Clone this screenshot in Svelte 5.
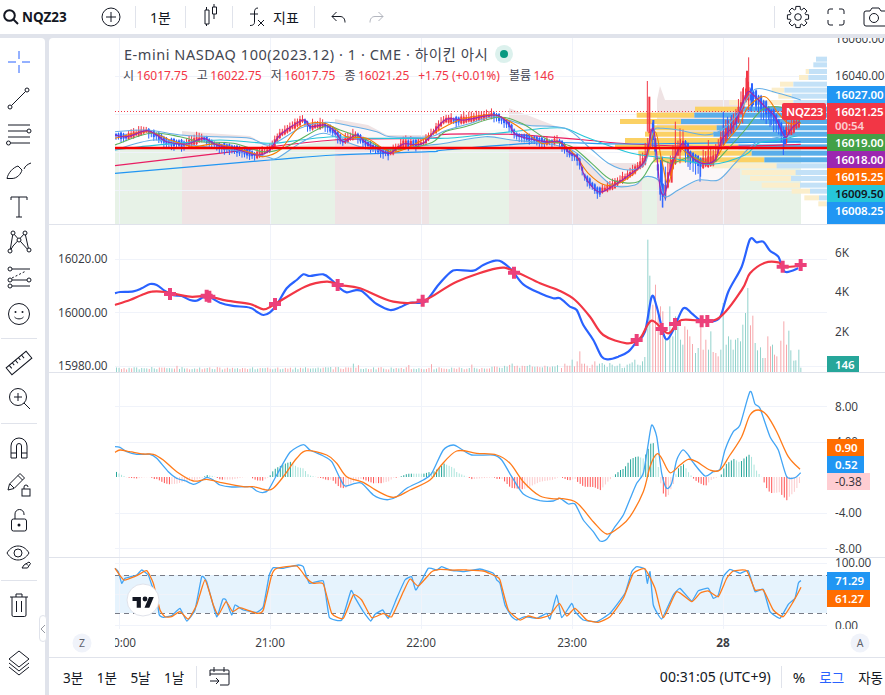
<script>
  const Z = (ox, oy, a) => a.map(([x, y]) => [ox + x / 3, oy + y / 3]);
  const sm = (p, t = 0.16) => {
    let d = `M${p[0][0].toFixed(1)} ${p[0][1].toFixed(1)}`;
    for (let i = 0; i < p.length - 1; i++) {
      const a = p[Math.max(i - 1, 0)], b = p[i], c = p[i + 1], e = p[Math.min(i + 2, p.length - 1)];
      d += `C${(b[0] + (c[0] - a[0]) * t).toFixed(1)} ${(b[1] + (c[1] - a[1]) * t).toFixed(1)} ${(c[0] - (e[0] - b[0]) * t).toFixed(1)} ${(c[1] - (e[1] - b[1]) * t).toFixed(1)} ${c[0].toFixed(1)} ${c[1].toFixed(1)}`;
    }
    return d;
  };
  const at = (p, x) => {
    if (x <= p[0][0]) return p[0][1];
    for (let i = 0; i < p.length - 1; i++) {
      if (x <= p[i + 1][0]) return p[i][1] + ((p[i + 1][1] - p[i][1]) * (x - p[i][0])) / (p[i + 1][0] - p[i][0]);
    }
    return p[p.length - 1][1];
  };
  let seed = 11;
  const rnd = () => (seed = (seed * 16807) % 2147483647) / 2147483647;

  const vlines = [119.5, 270.5, 421.5, 572.5, 723.5];

  /* main pane */
  const mz = (a, b) => [...Z(0, 0, a), ...Z(445, 0, b)];
  const price = mz(
    [[345,405],[380,410],[440,392],[470,405],[500,425],[560,432],[610,415],[650,435],[700,445],[770,465],[810,450],[840,405],[910,360],[930,380],[975,375],[1005,395],[1030,425],[1070,405],[1100,430],[1140,450],[1170,460],[1210,432],[1270,430]],
    [[0,360],[60,360],[150,345],[190,370],[215,405],[300,425],[345,425],[370,455],[400,475],[420,530],[460,575],[500,560],[560,520],[600,480],[625,385],[645,560],[660,580],[675,510],[695,460],[715,430],[740,470],[770,490],[810,480],[830,420],[870,370],[905,280],[925,285],[960,320],[990,350],[1020,410],[1040,385],[1065,365]]
  );
  const orangeM = sm(mz(
    [[345,415],[440,395],[510,420],[580,440],[650,432],[760,460],[790,470],[840,450],[900,380],[975,370],[1040,410],[1100,415],[1170,455],[1230,440]],
    [[0,380],[60,355],[150,345],[220,380],[290,430],[340,425],[390,465],[430,520],[480,555],[540,540],[600,480],[630,395],[650,480],[670,550],[700,450],[740,470],[800,490],[840,430],[880,380],[910,320],[960,290],[1000,340],[1030,370],[1067,370]]
  ));
  const greenM = sm(mz(
    [[345,435],[450,400],[540,410],[600,425],[700,430],[790,455],[860,440],[970,380],[1020,390],[1100,420],[1170,450],[1290,430]],
    [[0,395],[60,380],[160,352],[230,370],[310,420],[380,440],[440,490],[500,540],[580,545],[620,490],[640,475],[680,490],[740,470],[800,490],[850,445],[900,390],[950,330],[1000,320],[1040,340],[1067,370]]
  ));
  const tealM = sm(mz(
    [[345,450],[420,440],[530,430],[660,420],[810,430],[900,420],[1000,410],[1100,415],[1280,415]],
    [[0,415],[60,410],[200,395],[300,385],[360,385],[420,410],[560,460],[680,475],[800,493],[900,465],[940,430],[1000,420],[1067,405]]
  ));
  const upperP = mz(
    [[345,395],[440,390],[540,405],[650,410],[750,415],[810,435],[900,385],[980,367],[1050,378],[1130,395],[1170,410],[1290,410]],
    [[0,392],[70,372],[150,350],[240,375],[360,385],[430,440],[490,490],[550,510],[600,490],[625,395],[650,385],[700,390],[780,405],[830,390],[880,340],[930,268],[1000,280],[1067,300]]
  );
  const lowerP = mz(
    [[345,450],[460,420],[570,435],[700,450],[800,470],[830,475],[900,430],[970,400],[1050,430],[1130,450],[1290,435]],
    [[0,430],[120,410],[200,420],[300,430],[380,450],[430,490],[500,555],[570,555],[600,530],[640,540],[660,590],[700,570],[760,540],[820,540],[870,490],[930,430],[1010,410],[1067,405]]
  );
  const pinkM = sm(mz([[345,497],[700,455],[1000,420],[1290,415]], [[0,403],[200,403],[300,410],[420,420],[560,432],[800,440],[1067,433]]));
  const blueL = sm(mz([[345,520],[810,480],[1005,465],[1290,455]], [[0,450],[300,428],[560,432],[1067,425]]));
  const bandFill = sm(upperP) + 'L' + [...lowerP].reverse().map((q) => `${q[0].toFixed(1)} ${q[1].toFixed(1)}`).join('L') + 'Z';
  const upperM = sm(upperP), lowerM = sm(lowerP), purpleM = sm(price);

  const periods = [
    ['#e7f2e7', 'M115 148H182V224H115Z'],
    ['#efe3e4', 'M182 131L207 133L250 136L270 147V224H182Z'],
    ['#e7f2e7', 'M270 150L335 140V224H270Z'],
    ['#efe3e4', 'M335 119L368 125L387 135H429V224H335Z'],
    ['#e7f2e7', 'M429 138L509 128V224H429Z'],
    ['#efe3e4', 'M509 108L558 127L578 146L605 163H642V224H509Z'],
    ['#e7f2e7', 'M642 165H657V224H642Z'],
    ['#efe3e4', 'M657 100L660 86L665 100H740V224H657Z'],
    ['#e7f2e7', 'M740 148H801V224H740Z']
  ];

  const prof = [
    [170,0,1113,0],[187,0,1105,0],[207,1082,1092,0],[225,1062,1090,0],[245,1005,1045,0],[263,980,1018,0],[281,1000,1040,0],[300,852,1045,0],
    [320,750,880,1],[338,575,748,1],[357,525,708,1],[376,625,815,1],[395,600,805,1],[414,540,830,1],[433,510,880,1],[452,580,920,1],[472,625,958,1],
    [490,800,995,0],[510,890,1052,0],[528,915,1038,0],[548,950,1065,0],[566,1040,1095,0],[586,1078,1122,0],[604,1120,1145,0]
  ].map(([y, a, b, s]) => ({
    y: y / 3,
    yx: a ? 445 + a / 3 : 0,
    bx: 445 + b / 3,
    s
  }));

  const candles = [];
  for (let x = 116; x < 801; x += 2.52) {
    const y = at(price, x);
    const dy = at(price, x + 3) - at(price, x - 3);
    const up = dy < -0.3 || (Math.abs(dy) <= 0.3 && rnd() > 0.5);
    const b = 1.2 + rnd() * 2.4;
    const big = x > 640 ? 2.2 : 1;
    const w = (2 + rnd() * 3.4) * big;
    candles.push({ x, y1: y - b * big, y2: y + b * big, t: y - b * big - (up ? w : 1), u: y + b * big + (up ? 1 : w), c: up ? '#f23645' : '#2962ff' });
  }
  const spikes = [
    [607,243,395,'#f23645',1],[613,290,400,'#f23645',4],[625,360,420,'#2962ff',4],[652,470,622,'#2962ff',1],[648,480,570,'#2962ff',4],[661,500,602,'#2962ff',1],[680,480,548,'#f23645',4],[691,365,440,'#f23645',1],[705,385,490,'#f23645',1],[735,455,510,'#2962ff',1],[765,480,545,'#2962ff',1],[790,420,500,'#f23645',1],
    [835,335,440,'#2962ff',1],[848,350,420,'#2962ff',1],[860,345,400,'#2962ff',1],[875,340,390,'#2962ff',1],[893,265,370,'#f23645',1],[911,172,330,'#f23645',1],[906,212,300,'#f23645',4],[921,250,320,'#2962ff',4],[933,285,320,'#2962ff',3],[975,335,380,'#2962ff',1],[1015,380,465,'#2962ff',1],[1020,390,432,'#2962ff',4]
  ].map(([x, a, b, c, w]) => ({ x: 445 + x / 3, a: a / 3, b: b / 3, c, w: w === 1 ? 1 : w / 2 }));

  const tags1 = [
    [86,17,'#2196f3','#fff','16027.00'],
    [134,17,'#43a047','#fff','16019.00'],
    [151,17,'#9c27b0','#fff','16018.00'],
    [168,17,'#ff6d00','#fff','16015.25'],
    [185,17,'#26c6da','#131722','16009.50'],
    [202,18,'#2196f3','#fff','16008.25'],
    [220,18,'#2196f3','#fff','16004.00']
  ];

  /* pane 2 */
  const rsiB = sm([...Z(110, 230, [[15,190],[30,186],[70,184],[95,175],[120,162],[140,165],[165,183],[190,196],[215,198],[240,210],[260,212],[280,202],[300,202],[330,218],[365,227],[420,233],[440,245],[460,255],[480,247],[500,225],[530,175],[560,150],[580,133],[600,138],[640,133],[665,150],[690,175],[710,187],[735,181],[755,183],[780,205],[800,222],[840,240],[870,232],[900,218],[945,215],[985,165],[1020,128],[1040,120],[1090,122],[1120,105],[1155,92],[1175,95],[1205,120],[1240,163],[1290,190],[1330,205]]),
    ...Z(560, 230, [[0,205],[30,230],[50,240],[70,285],[100,330],[125,380],[145,388],[175,380],[205,365],[230,335],[255,305],[275,200],[290,230],[310,310],[322,328],[340,300],[370,235],[395,250],[420,270],[450,275],[480,262],[505,185],[545,110],[570,28],[590,37],[610,35],[630,62],[655,80],[675,125],[715,115]])]);
  const rsiR = sm([...Z(110, 230, [[15,225],[60,210],[95,195],[125,185],[165,186],[240,200],[290,198],[350,212],[420,222],[460,238],[490,225],[585,170],[650,155],[690,165],[750,175],[850,215],[940,212],[1040,155],[1160,115],[1210,122],[1290,160]]),
    ...Z(560, 230, [[0,183],[45,210],[90,260],[130,315],[200,340],[240,325],[275,272],[325,310],[365,270],[470,268],[545,180],[570,130],[615,98],[655,97],[670,110],[720,108]])]);
  const crosses = [
    ...Z(110, 230, [[180,192],[290,197],[298,200],[495,222],[683,165],[938,212],[1212,128]]),
    ...Z(560, 230, [[230,330],[305,297],[345,282],[425,274],[442,273],[668,110],[722,105]])
  ];
  const vols = [];
  for (let x = 116; x < 558; x += 2.52) {
    const late = x > 490 ? 1.6 : 1;
    let h = (2.5 + rnd() * 2.5) * late;
    if (rnd() > 0.93) h += 2 + rnd() * 3;
    vols.push({ x, h, c: rnd() > 0.5 ? '#93d3cc' : '#f7a8ac' });
  }
  const g = '#93d3cc', r = '#f7a8ac';
  [[3,415,r],[13,402,r],[20,408,r],[28,408,r],[35,390,g],[42,410,r],[50,395,r],[58,365,r],[64,402,r],[72,402,r],[80,408,r],[88,415,r],[95,405,r],[103,395,r],[110,408,g],[117,402,g],[125,400,g],[132,405,g],[140,412,g],[148,400,g],[155,405,g],[163,410,g],[170,408,g],[178,402,g],[185,415,g],[192,414,g],[200,405,g],[208,402,g],[215,398,g],[223,390,g],[232,405,g],[239,407,g],[246,395,g],[253,382,g],[262,30,g],[268,138,g],[277,225,r],[285,165,r],[293,260,r],[300,230,r],[307,245,r],[315,320,g],[328,230,g],[337,320,g],[345,260,g],[352,290,g],[360,330,g],[367,345,g],[373,290,r],[381,300,r],[388,320,r],[396,343,r],[405,370,g],[413,355,g],[421,290,r],[428,360,r],[436,330,r],[444,360,g],[451,305,g],[458,367,r],[466,370,r],[473,380,r],[481,360,g],[488,220,g],[497,345,g],[504,320,g],[511,330,g],[518,360,g],[525,330,g],[532,325,g],[540,335,g],[547,285,g],[555,250,g],[562,175,g],[570,287,r],[577,258,r],[584,340,g],[591,362,g],[600,353,g],[607,385,g],[614,385,r],[622,320,r],[630,350,r],[636,345,g],[642,375,r],[649,380,r],[661,333,r],[670,275,r],[678,345,r],[685,303,g],[691,362,g],[700,393,g],[706,392,g],[715,360,g],[721,414,g]]
    .forEach(([x, t, c]) => vols.push({ x: 560 + x / 3, h: (427 - t) / 3, c }));

  /* pane 3 */
  const mB = [...Z(110, 420, [[15,80],[30,82],[50,95],[80,103],[120,103],[140,115],[175,155],[200,175],[225,182],[250,193],[270,185],[290,172],[310,180],[330,195],[365,201],[420,200],[440,213],[458,218],[475,210],[500,165],[540,97],[580,74],[600,90],[640,108],[665,125],[690,175],[705,198],[735,190],[755,190],[790,225],[810,235],[835,239],[860,230],[890,205],[940,180],[965,160],[1000,90],[1030,75],[1050,85],[1085,105],[1150,105],[1175,120],[1205,170],[1240,222],[1290,242],[1330,243]]),
    ...Z(560, 380, [[0,355],[25,372],[45,372],[70,420],[100,455],[120,483],[140,478],[165,440],[190,405],[215,345],[230,310],[250,280],[265,190],[275,135],[290,170],[305,280],[320,325],[335,310],[350,240],[368,210],[385,225],[400,248],[435,288],[460,275],[480,268],[495,210],[520,155],[540,135],[570,35],[585,72],[600,85],[630,170],[655,210],[680,290],[705,293],[722,278]])];
  const mO = [...Z(110, 420, [[15,97],[30,90],[60,95],[100,102],[130,103],[160,120],[200,155],[250,183],[290,178],[330,187],[400,200],[430,200],[470,210],[490,205],[520,170],[560,115],[590,92],[650,105],[680,130],[710,170],[760,187],[800,212],[850,232],[900,210],[960,180],[990,140],[1040,93],[1100,100],[1160,105],[1200,130],[1240,185],[1290,228],[1340,237]]),
    ...Z(560, 380, [[0,355],[50,368],[100,425],[140,462],[180,440],[210,410],[250,335],[270,260],[290,222],[305,235],[330,278],[360,255],[385,238],[410,245],[450,270],[480,270],[510,225],[545,170],[570,105],[595,90],[620,105],[650,155],[685,230],[720,268]])];
  const macdB = sm(mB, 0.12), macdO = sm(mO);
  const hist = [];
  let prev = 0;
  for (let x = 116; x < 801; x += 2.52) {
    const v = at(mO, x) - at(mB, x);
    const grow = Math.abs(v) > Math.abs(prev);
    hist.push({ x, v, c: v > 0 ? (grow ? '#26a69a' : '#ace5dc') : grow ? '#ff5252' : '#fccbcd' });
    prev = v;
  }

  /* pane 4 */
  const sB = sm([...Z(50, 555, [[195,40],[205,50],[215,85],[225,70],[260,60],[275,45],[295,60],[305,90],[320,130],[328,180],[340,187],[365,182],[390,160],[410,198],[435,165],[455,65],[470,80],[500,185],[518,133],[528,135],[545,180],[555,150],[580,165],[620,172],[640,155],[658,60],[670,38],[700,40],[745,30],[760,35],[778,85],[820,78],[838,187],[875,195],[903,107],[915,128],[940,170],[962,198],[975,178],[998,165],[1015,190],[1040,130],[1065,75],[1085,65],[1098,105],[1135,40],[1160,45],[1175,35],[1200,45],[1240,50],[1290,42],[1330,55],[1340,75]]),
    ...Z(500, 555, [[0,85],[15,150],[35,185],[50,195],[75,185],[110,190],[140,175],[150,192],[170,120],[185,188],[215,145],[225,170],[250,195],[290,200],[330,175],[375,115],[395,50],[410,35],[435,42],[442,85],[450,50],[460,150],[485,192],[520,120],[540,100],[575,138],[595,107],[625,100],[640,130],[655,120],[670,65],[690,43],[720,55],[745,47],[765,110],[790,103],[810,170],[840,190],[865,148],[885,130],[895,85],[903,77]])], 0.06);
  const sO = sm([...Z(50, 555, [[195,40],[222,75],[260,62],[290,47],[310,85],[330,165],[345,185],[365,185],[390,170],[415,192],[440,150],[465,75],[490,150],[505,180],[528,140],[548,170],[570,158],[620,175],[640,165],[665,60],[680,40],[740,33],[770,70],[790,85],[820,87],[845,175],[880,190],[910,120],[935,135],[965,188],[1000,175],[1025,185],[1060,110],[1080,72],[1105,93],[1145,50],[1170,43],[1200,45],[1250,45],[1300,48],[1340,65]]),
    ...Z(500, 555, [[0,75],[25,165],[60,195],[85,183],[115,190],[150,180],[178,145],[200,183],[225,160],[260,195],[295,202],[330,185],[370,130],[400,55],[435,42],[465,100],[490,188],[530,110],[575,140],[600,115],[625,108],[655,125],[680,70],[700,48],[740,47],[765,105],[790,105],[820,165],[850,185],[880,140],[903,97]])], 0.08);

  const gear = (() => {
    let d = '';
    const n = 8;
    for (let i = 0; i < n; i++) {
      const a = (i / n) * Math.PI * 2;
      const pt = (rad, da) => `${(14 + rad * Math.cos(a + da)).toFixed(2)} ${(14 + rad * Math.sin(a + da)).toFixed(2)}`;
      d += (i ? 'L' : 'M') + pt(8, -0.3) + 'L' + pt(10.8, -0.2) + 'L' + pt(10.8, 0.2) + 'L' + pt(8, 0.3);
    }
    return d + 'Z';
  })();
</script>

<div class="root">
  <header class="top">
    <svg class="i search" width="16" height="16" viewBox="0 0 16 16"><circle cx="6.5" cy="6.5" r="5.3" /><path d="M10.5 10.5L15 15" /></svg>
    <b class="sym">NQZ23</b>
    <svg class="i plus" width="20" height="20" viewBox="0 0 20 20"><circle cx="10" cy="10" r="9" /><path d="M10 5v10M5 10h10" /></svg>
    <span class="div d1"></span>
    <span class="tt iv">1분</span>
    <span class="div d2"></span>
    <svg class="i cnd" width="16" height="22" viewBox="0 0 16 22"><path d="M3.5 3V6M3.5 20V22M2 6h4v14H2zM11 0v3M11 10v5M9.5 3h4v7h-4z" /></svg>
    <span class="div d3"></span>
    <svg class="i fx" width="16" height="20" viewBox="0 0 16 20"><path d="M9 1C6 1 5.5 3 5.500 5V15C5.500 17 4.500 18.500 1 18.500M1 7H9M9 13l6 6M15 13l-6 6" /></svg>
    <span class="tt ind">지표</span>
    <span class="div d4"></span>
    <svg class="i undo" width="15" height="13" viewBox="0 0 15 13"><path d="M5.500 1L1 5.500l4.500 4.500M1 5.500h8c3 0 5 2 5 6" /></svg>
    <svg class="i redo" width="15" height="13" viewBox="0 0 15 13"><path d="M9.500 1L14 5.500 9.500 10M14 5.500H6c-3 0-5 2-5 6" /></svg>
    <span class="right">
      <span class="div"></span>
      <svg class="i gear" width="28" height="28" viewBox="0 0 28 28"><path d={gear} /><circle cx="14" cy="14" r="3.300" /></svg>
      <svg class="i full" width="18" height="18" viewBox="0 0 18 18"><path d="M1 6V3a2 2 0 0 1 2-2h3M12 1h3a2 2 0 0 1 2 2v3M17 12v3a2 2 0 0 1-2 2h-3M6 17H3a2 2 0 0 1-2-2v-3" /></svg>
      <svg class="i cam" width="23" height="20" viewBox="0 0 23 20"><path d="M1 6a2 2 0 0 1 2-2h4l2-3h7l2 3h4a2 2 0 0 1 2 2v11a2 2 0 0 1-2 2H3a2 2 0 0 1-2-2z" /><circle cx="11" cy="11" r="4.500" /></svg>
    </span>
  </header>

  <div class="body">
    <aside class="side">
      <div class="t blue"><svg width="28" height="28" viewBox="0 0 28 28"><path d="M14 3v8M14 17v8M3 14h8M17 14h8" /></svg></div>
      <div class="t"><svg width="28" height="28" viewBox="0 0 28 28"><path d="M6.500 21.500L20.500 7.500" /><circle cx="5" cy="23" r="2" /><circle cx="22" cy="6" r="2" /></svg></div>
      <div class="t"><svg width="28" height="28" viewBox="0 0 28 28"><path d="M3 5h22M3 11h19M3 17h22M6 23h19" /><circle cx="24" cy="11" r="2" /><circle cx="3.500" cy="23" r="2" /></svg></div>
      <div class="t"><svg width="28" height="28" viewBox="0 0 28 28"><path d="M2 22.500C3 17 8 11.500 13 10l4 4c-1 4-5 8.500-10 8.500zM19 13c1-3 4-5 7-6" /></svg></div>
      <div class="t"><svg width="28" height="28" viewBox="0 0 28 28"><path d="M6 8V5h16v3M14 5v20M11 25h6" /></svg></div>
      <div class="t"><svg width="28" height="28" viewBox="0 0 28 28"><path d="M5 23L8 5l16 18L20 5 8 18z" /><circle cx="5" cy="23" r="2" fill="#fff" /><circle cx="8" cy="5" r="2" fill="#fff" /><circle cx="20" cy="5" r="2" fill="#fff" /><circle cx="24" cy="22" r="2" fill="#fff" /><circle cx="14" cy="12" r="2" fill="#fff" /></svg></div>
      <div class="t"><svg width="28" height="28" viewBox="0 0 28 28"><path d="M7 5h18M7 16h15M7 22h18" /><path d="M7 14L21 7" stroke-dasharray="2 2" /><circle cx="5" cy="5" r="2" /><circle cx="5" cy="16" r="2" /><circle cx="24" cy="16" r="2" /><circle cx="5" cy="22" r="2" /></svg></div>
      <div class="t"><svg width="28" height="28" viewBox="0 0 28 28"><circle cx="14" cy="14" r="10.500" /><circle class="f" cx="10.500" cy="12" r="1" /><circle class="f" cx="17.500" cy="12" r="1" /><path d="M9.500 17c2 2.500 7 2.500 9 0" /></svg></div>
      <span class="sep"></span>
      <div class="t"><svg width="28" height="28" viewBox="0 0 28 28"><g transform="rotate(-40 14 14)"><rect x="1" y="9.500" width="26" height="9" /><path d="M5 9.500v4M9 9.500v3M13 9.500v4M17 9.500v3M21 9.500v4" /></g></svg></div>
      <div class="t"><svg width="28" height="28" viewBox="0 0 28 28"><circle cx="13" cy="12" r="8.500" /><path d="M13 8v8M9 12h8M19 18l6 6" /></svg></div>
      <span class="sep"></span>
      <div class="t"><svg width="28" height="28" viewBox="0 0 28 28"><path d="M6 24V12a8 8 0 0 1 16 0v12h-5.500V12a2.500 2.500 0 0 0-5 0v12zM6 19h5.500M16.500 19H22" /></svg></div>
      <div class="t"><svg width="28" height="28" viewBox="0 0 28 28"><path d="M3 20l1.500-6L15 3.500 19.500 8 9 18.500zM13 5.500l4.500 4.500M5 14l4 4" /><rect x="17" y="19" width="8" height="7" /><path d="M19 19v-2a2 2 0 0 1 4 0" /></svg></div>
      <div class="t"><svg width="28" height="28" viewBox="0 0 28 28"><rect x="6.500" y="13" width="15" height="12" rx="2" /><path d="M10 13V8a4.500 4.500 0 0 1 9 0v1" /><circle class="f" cx="14" cy="19" r="1.500" /></svg></div>
      <div class="t"><svg width="28" height="28" viewBox="0 0 28 28"><path d="M2 11c3-5 7-7 11-7s8 2 11 7c-3 5-7 7-11 7s-8-2-11-7z" /><circle cx="13" cy="11" r="4" /><path d="M17 26l2-3 5-3 1.500 1.500-3 4.500zM21 21.500l2 2" /></svg></div>
      <span class="sep"></span>
      <div class="t"><svg width="28" height="28" viewBox="0 0 28 28"><path d="M5 6h18M11 6V3h6v3M7 6v18a1.500 1.500 0 0 0 1.500 1.500h11A1.500 1.500 0 0 0 21 24V6M11.500 10v11M16.500 10v11" /></svg></div>
      <div class="t bottom"><svg width="28" height="28" viewBox="0 0 28 28"><path d="M14 3l10 8-10 8-10-8zM4 15l10 8 10-8M4 19l10 8 10-8" /></svg></div>
      <span class="collapse"><svg width="6" height="10" viewBox="0 0 6 10"><path d="M5 1L1 5l4 4" /></svg></span>
    </aside>

    <main class="main">
      <section class="pane p1">
        <svg class="chart" width="836" height="186" viewBox="49 38 836 186">
          {#each periods as q}<path d={q[1]} fill={q[0]} />{/each}
          {#each [76.5, 114.5, 152.5, 190.5] as y}<path class="gh" d="M115 {y}H827" />{/each}
          {#each vlines as x}<path class="gh" d="M{x} 38V224" />{/each}
          <path d={bandFill} fill="#fff" opacity=".72" />
          {#each prof as q}
            {#if q.yx}<rect x={q.yx} y={q.y} width={q.bx - q.yx} height="5" fill={q.s ? '#fbd164' : '#fbeecb'} />{/if}
            <rect x={q.bx} y={q.y} width={827 - q.bx} height="5" fill={q.s ? '#59ade9' : '#c3e1f7'} />
          {/each}
          <path class="ln" d={pinkM} stroke="#e91e63" stroke-width="1.200" />
          <path class="ln" d={blueL} stroke="#2196f3" stroke-width="1.200" />
          {#each candles as c}
            <path d="M{c.x} {c.t}V{c.u}" stroke={c.c} stroke-width="1" />
            <path d="M{c.x} {c.y1}V{c.y2}" stroke={c.c} stroke-width="2" />
          {/each}
          {#each spikes as s}<path d="M{s.x} {s.a}V{s.b}" stroke={s.c} stroke-width={s.w} />{/each}
          <path class="ln" d={tealM} stroke="#26c6da" stroke-width="1.100" />
          <path class="ln" d={upperM} stroke="#64aee6" stroke-width="1.100" />
          <path class="ln" d={lowerM} stroke="#64aee6" stroke-width="1.100" />
          <path class="ln" d={greenM} stroke="#5cb260" stroke-width="1.100" />
          <path class="ln" d={orangeM} stroke="#f57c00" stroke-width="1.100" />
          <path class="ln" d={purpleM} stroke="#9c27b0" stroke-width="1.200" />
          <path d="M115 111.500H783" stroke="#f23645" stroke-dasharray="1 2" />
          <path d="M115 148H827" stroke="#f50000" stroke-width="2.400" />
          <rect x="827" y="38" width="58" height="186" fill="#fff" />
          <text class="ax" x="835" y="43">16060.00</text>
          <text class="ax" x="835" y="80">16040.00</text>
          {#each tags1 as q}
            <rect x="827" y={q[0]} width="58" height={q[1]} fill={q[2]} />
            <text class="tg" x="835" y={q[0] + 13} fill={q[3]}>{q[4]}</text>
          {/each}
          <rect x="827" y="103" width="58" height="31" fill="#f23645" />
          <text class="tg" x="835" y="116" fill="#fff">16021.25</text>
          <text class="tg dim" x="835" y="130" fill="#fff">00:54</text>
          <rect x="782" y="103" width="44" height="17" rx="2" fill="#f23645" />
          <text class="tg" x="786" y="116" fill="#fff">NQZ23</text>
        </svg>
        <div class="legend">
          <div class="title">E-mini NASDAQ 100(2023.12) · 1 · CME · 하이킨 아시 <i class="dot"></i></div>
          <div class="ohlc"><span>시<em>16017.75</em></span><span>고<em>16022.75</em></span><span>저<em>16017.75</em></span><span>종<em>16021.25</em></span><em class="chg">+1.75 (+0.01%)</em><span>볼륨<em>146</em></span></div>
        </div>
      </section>

      <section class="pane p2">
        <svg class="chart" width="836" height="147" viewBox="49 225 836 147">
          {#each [259.5, 312.5, 366.5] as y}<path class="gh" d="M115 {y}H827" />{/each}
          {#each vlines as x}<path class="gh" d="M{x} 225V372" />{/each}
          {#each vols as v}<rect x={v.x} y={372 - v.h} width="1" height={v.h} fill={v.c} />{/each}
          <path class="ln" d={rsiB} stroke="#2962ff" stroke-width="2.200" />
          <path class="ln" d={rsiR} stroke="#f23645" stroke-width="2.200" />
          {#each crosses as c}<path d="M{c[0] - 2} {c[1] - 6}h4v4h4v4h-4v4h-4v-4h-4v-4h4z" fill="#ec407a" />{/each}
          <text class="ax" x="58" y="263">16020.00</text>
          <text class="ax" x="58" y="317">16000.00</text>
          <text class="ax" x="58" y="370">15980.00</text>
          <text class="ax" x="835" y="257">6K</text>
          <text class="ax" x="835" y="296">4K</text>
          <text class="ax" x="835" y="336">2K</text>
          <rect x="827" y="356" width="32" height="16" fill="#26a69a" />
          <text class="tg" x="835" y="369" fill="#fff">146</text>
        </svg>
      </section>

      <section class="pane p3">
        <svg class="chart" width="836" height="184" viewBox="49 373 836 184">
          {#each [406.5, 442.500, 513.5, 548.5] as y}<path class="gh" d="M115 {y}H827" />{/each}
          {#each vlines as x}<path class="gh" d="M{x} 373V557" />{/each}
          {#each hist as h}<rect x={h.x} y={h.v > 0 ? 477 - h.v : 477} width="1" height={Math.abs(h.v)} fill={h.c} />{/each}
          <path class="ln" d={macdB} stroke="#42a5f5" stroke-width="1.300" />
          <path class="ln" d={macdO} stroke="#ff7b1a" stroke-width="1.300" />
          <text class="ax" x="835" y="411">8.00</text>
          <text class="ax" x="835" y="446">4.00</text>
          <text class="ax" x="835" y="517">-4.00</text>
          <text class="ax" x="835" y="553">-8.00</text>
          <rect x="827" y="439" width="37" height="17" fill="#ff6d00" />
          <text class="tg" x="835" y="452" fill="#fff">0.90</text>
          <rect x="827" y="456" width="37" height="17" fill="#2196f3" />
          <text class="tg" x="835" y="469" fill="#fff">0.52</text>
          <rect x="827" y="473" width="43" height="17" fill="#ffcdd2" />
          <text class="ax" x="835" y="486">-0.38</text>
        </svg>
      </section>

      <section class="pane p4">
        <svg class="chart" width="836" height="71" viewBox="49 558 836 71">
          <rect x="115" y="575" width="712" height="38" fill="#e6f3fd" />
          {#each [563.5, 594.5, 625.5] as y}<path class="gh" d="M115 {y}H827" />{/each}
          {#each vlines as x}<path class="gh" d="M{x} 558V629" />{/each}
          <path d="M115 575.500H827M115 613.500H827" stroke="#787b86" stroke-dasharray="5 4" />
          <path class="ln" d={sB} stroke="#42a5f5" stroke-width="1.300" />
          <path class="ln" d={sO} stroke="#ff7b1a" stroke-width="1.300" />
          <text class="ax" x="835" y="567">100.00</text>
          <text class="ax" x="835" y="630">0.00</text>
          <rect x="827" y="572" width="43" height="18" fill="#2196f3" />
          <text class="tg" x="835" y="585" fill="#fff">71.29</text>
          <rect x="827" y="590" width="43" height="17" fill="#ff6d00" />
          <text class="tg" x="835" y="603" fill="#fff">61.27</text>
          <circle cx="143" cy="600" r="16" fill="#fff" stroke="#e0e3eb" />
          <path transform="translate(132.500 594.500) scale(.6)" d="M14 22H7V11H0V4h14v18zM28 22h-8l7.500-18h8L28 22z" fill="#131722" />
          <circle cx="145" cy="599" r="2.400" fill="#131722" />
        </svg>
      </section>

      <div class="time">
        <svg class="chart" width="836" height="28" viewBox="49 629 836 28">
          <circle cx="82" cy="643" r="9.500" fill="#f0f3fa" />
          <text class="ax small" x="82" y="647" text-anchor="middle">Z</text>
          <text class="ax" x="113" y="647">0:00</text>
          <rect x="100" y="630" width="15" height="26" fill="#fff" />
          <text class="ax" x="270" y="647" text-anchor="middle">21:00</text>
          <text class="ax" x="421" y="647" text-anchor="middle">22:00</text>
          <text class="ax" x="572" y="647" text-anchor="middle">23:00</text>
          <text class="ax bold" x="723" y="647" text-anchor="middle">28</text>
          <circle cx="860" cy="643" r="9.500" fill="#f0f3fa" />
          <text class="ax small" x="860" y="647" text-anchor="middle">A</text>
        </svg>
      </div>

      <footer class="foot">
        <span>3분</span><span>1분</span><span>5날</span><span>1날</span>
        <span class="div"></span>
        <svg class="i" width="21" height="19" viewBox="0 0 21 19"><path d="M1 9V3h18a1 1 0 0 1 1 1v13a1 1 0 0 1-1 1h-8M1 7h19M5 0v5M15 0v5M1 14h9M7 11l3 3-3 3" /></svg>
        <span class="rt">
          <span class="clock">00:31:05 (UTC+9)</span>
          <span class="div"></span>
          <span class="pc">%</span><span class="log">로그</span><span>자동</span>
        </span>
      </footer>
    </main>
  </div>
</div>

<style>
  :global(body) { margin: 0; }
  .root {
    width: 885px; height: 695px; overflow: hidden; background: #e0e3eb;
    display: flex; flex-direction: column;
    font-family: "Noto Sans", "Noto Sans CJK KR", sans-serif; color: #131722;
  }
  .i { flex: none; fill: none; stroke: #131722; stroke-width: 1; }
  .top { height: 34px; flex: none; background: #fff; margin-bottom: 4px; display: flex; align-items: center; font-size: 14px; }
  .search { margin-left: 3px; stroke-width: 2; }
  .sym { margin-left: 3px; font-size: 13.500px; font-weight: 700; width: 41px; }
  .plus { margin-left: 38px; }
  .div { width: 1px; height: 22px; background: #e0e3eb; flex: none; }
  .d1 { margin-left: 14px; }
  .iv { margin-left: 14px; width: 35px; }
  .cnd { margin-left: 17px; margin-top: -5px; }
  .d3 { margin-left: 13px; }
  .fx { margin-left: 16px; }
  .ind { margin-left: 8px; width: 27px; }
  .d4 { margin-left: 14px; }
  .undo { margin-left: 16px; }
  .redo { margin-left: 23px; stroke: #b2b5be; }
  .right { margin-left: auto; display: flex; align-items: center; }
  .gear { margin-left: 9px; }
  .full { margin-left: 15px; }
  .cam { margin-left: 18px; margin-right: -1px; }
  .body { flex: 1; display: flex; gap: 4px; min-height: 0; }
  .side { position: relative; width: 45px; flex: none; background: #fff; border-top-right-radius: 4px; padding: 6px 0 15px; box-sizing: border-box; display: flex; flex-direction: column; }
  .t { width: 38px; height: 36px; flex: none; display: flex; align-items: center; justify-content: center; }
  .t svg { fill: none; stroke: #131722; stroke-width: 1; overflow: visible; }
  .t .f { fill: #131722; stroke: none; }
  .t.blue svg { stroke: #2962ff; }
  .t.bottom { margin-top: auto; }
  .sep { width: 36px; height: 1px; background: #e0e3eb; margin: 6px 1px; flex: none; }
  .collapse { position: absolute; left: 39px; top: 577px; width: 8px; height: 27px; box-sizing: border-box; background: #fff; border: 1px solid #e0e3eb; border-radius: 4px; display: flex; align-items: center; justify-content: center; }
  .collapse svg { fill: none; stroke: #9598a1; stroke-width: 1; }
  .main { flex: 1; min-width: 0; background: #fff; border-top-left-radius: 4px; display: flex; flex-direction: column; }
  .pane { position: relative; flex: none; border-bottom: 1px solid #e0e3eb; }
  .chart { display: block; }
  .p4 { border-bottom: none; }
  .time { height: 28px; flex: none; border-bottom: 1px solid #e0e3eb; }
  .gh { stroke: #f0f3fa; stroke-width: 1; fill: none; }
  .ln { fill: none; stroke-linejoin: round; }
  .ax { font-size: 11.800px; letter-spacing: -.12px; fill: #131722; fill-opacity: .85; }
  .ax.small { font-size: 10.500px; fill: #434651; }
  .ax.bold { font-weight: 700; }
  .tg { font-size: 11.500px; letter-spacing: -.1px; font-weight: 600; }
  .dim { opacity: .75; }
  .legend { position: absolute; left: 75px; top: 6px; color: #434651; }
  .title { font-size: 14.500px; letter-spacing: .55px; line-height: 20px; display: flex; align-items: center; gap: 11px; }
  .dot { width: 8px; height: 8px; border-radius: 50%; background: #089981; box-shadow: 0 0 0 5px rgba(8,153,129,.14); }
  .ohlc { display: flex; font-size: 12px; gap: 9px; margin-top: 3px; line-height: 18px; margin-left: -1px; }
  .ohlc em { font-style: normal; color: #f23645; margin-left: 2.500px; }
  .ohlc em.chg { margin-left: 0; }
  .foot { height: 37px; flex: none; display: flex; align-items: center; font-size: 13.500px; padding-left: 14px; }
  .foot > span:not(.div):not(.rt) { width: 33.700px; }
  .foot > .div { margin-left: -2px; }
  .foot > .i { margin-left: 12px; }
  .rt { margin-left: auto; display: flex; align-items: center; padding-right: 2px; }
  .clock { font-size: 14px; letter-spacing: .05px; }
  .rt .div { margin: 0 11px 0 10px; }
  .pc { font-size: 15px; margin-right: 14px; }
  .log { color: #2962ff; margin-right: 14px; }
</style>
